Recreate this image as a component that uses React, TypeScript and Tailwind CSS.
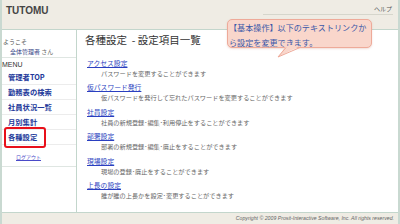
const menu = ["管理者TOP", "勤務表の検索", "社員状況一覧", "月別集計", "各種設定"];

const items = [
  { title: "アクセス設定", desc: "パスワードを変更することができます" },
  { title: "仮パスワード発行", desc: "仮パスワードを発行して忘れたパスワードを変更することができます" },
  { title: "社員設定", desc: "社員の新規登録･編集･利用停止をすることができます" },
  { title: "部署設定", desc: "部署の新規登録･編集･廃止をすることができます" },
  { title: "現場設定", desc: "現場の登録･廃止をすることができます" },
  { title: "上長の設定", desc: "誰が誰の上長かを設定･変更することができます" },
];

export default function App() {
  return (
    <div className="relative w-[400px] h-[224px] flex flex-col overflow-hidden bg-white border-l-2 border-r-2 border-[#c9d9d1] font-['Noto_Sans_CJK_JP',sans-serif]">
      {/* header */}
      <div className="h-[30px] shrink-0 flex justify-between items-start bg-[#efece4] border-b border-[#c3d6cc]">
        <div className="pl-[4px] pt-[5px] leading-[12px] text-[10px] font-bold text-[#444] font-['Liberation_Sans',sans-serif]">
          TUTOMU
        </div>
        <div className="mt-[3px] mr-[5px] w-[130px] h-[12px] border-b border-[#d6d6cc] text-right text-[6px] leading-[11px] text-[#555] pr-[1px]">
          ヘルプ
        </div>
      </div>

      <div className="flex flex-1 min-h-0">
        {/* sidebar */}
        <div className="w-[75px] shrink-0 border-r border-[#c3d6cc]">
          <div className="pt-[7px] pl-[1px] border-b border-[#dfe6e2] text-[6px] leading-[10px]">
            <div className="text-[#555]">ようこそ</div>
            <div className="pl-[7px] text-[#3a4a8a]">
              全体管理者 <span className="text-[#666]">さん</span>
            </div>
          </div>
          <div className="pt-[2px] text-[7px] leading-[10px] text-[#333] font-['Liberation_Sans',sans-serif]">MENU</div>
          {menu.map((m, i) => (
            <div
              key={m}
              className="relative h-[15px] pl-[6px] border-b border-[#ececec] text-[7.3px] leading-[14px] font-bold text-[#22389a]"
            >
              {m}
              {i === menu.length - 1 && (
                <div className="absolute left-[2px] top-[-3px] w-[42px] h-[21px] border-2 border-[#e8101a] rounded-[3px]" />
              )}
            </div>
          ))}
          <div className="pt-[8px] pb-[5px] pl-[14px] border-b border-[#dfe6e2] text-[5px] leading-[8px]">
            <span className="underline text-[#4a4ac8]">ログアウト</span>
          </div>
        </div>

        {/* main */}
        <div className="flex-1 pl-[8px] pt-[3px]">
          <div className="text-[10.5px] leading-[14px] text-[#333]">各種設定 &nbsp;- 設定項目一覧</div>
          <div className="mt-[11px] flex flex-col gap-[2.4px]">
            {items.map((it) => (
              <div key={it.title}>
                <div className="pl-[2px] text-[6.8px] leading-[10px] text-[#2a3fc0] underline">{it.title}</div>
                <div className="pl-[16px] text-[6.2px] leading-[12px] text-[#666]">{it.desc}</div>
              </div>
            ))}
          </div>
        </div>
      </div>

      {/* footer */}
      <div className="h-[12px] shrink-0 bg-[#efece4] border-t border-[#c3d6cc] pr-[4px] text-right italic text-[5.2px] leading-[11px] text-[#666] font-['Liberation_Sans',sans-serif]">
        Copyright © 2009 Prosit-Interactive Software, Inc. All rights reserved.
      </div>

      {/* callout */}
      <div className="absolute left-[225px] top-[19px] w-[145px] h-[29px] pl-[1px] bg-[#f9d6cb] border border-[#eeaa99] rounded-[5px] text-[8.1px] leading-[15px] text-[#3b58a8] whitespace-nowrap shadow-[0_1px_2px_rgba(200,120,100,0.25)]">
        【基本操作】以下のテキストリンクか
        <br />
        ら設定を変更できます。
      </div>
      <svg className="absolute left-[274px] top-[46px]" width="26" height="12" viewBox="0 0 26 12">
        <polygon points="10,0 24,0 2,11" fill="#f9d6cb" />
        <polyline points="10,1.5 2,11 24,1.5" fill="none" stroke="#eeaa99" strokeWidth="1" />
      </svg>
    </div>
  );
}
